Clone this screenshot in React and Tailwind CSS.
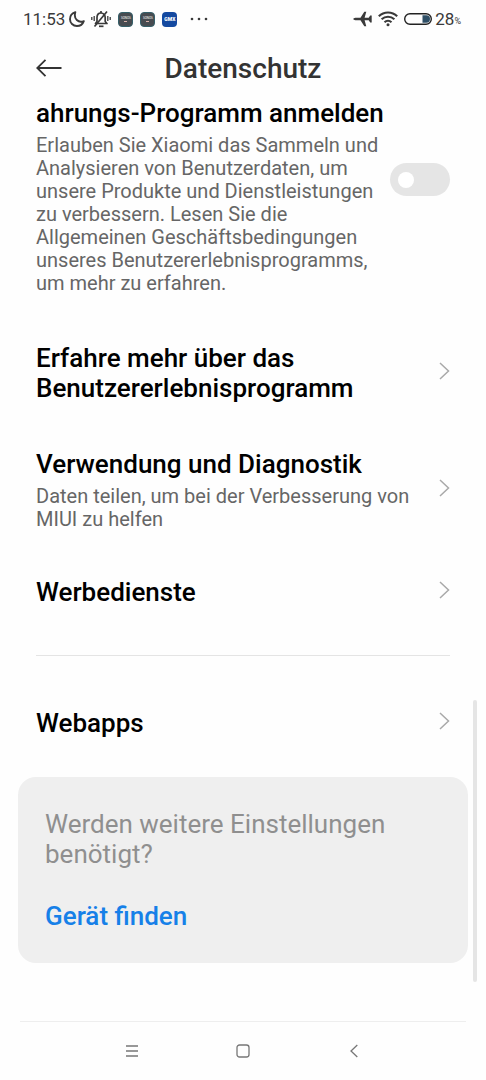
import { useState } from 'react';

const Chevron = () => (
  <svg className="w-3 h-5 shrink-0" viewBox="0 0 12 20" fill="none" stroke="#a9a9a9" strokeWidth="1.5">
    <path d="M2 2l8.5 8L2 18" />
  </svg>
);

const StatusBar = () => (
  <div className="flex items-center justify-between h-9 pl-[23px] pr-[25px] mt-px text-[#3a3a3a]">
    <div className="flex items-center">
      <span className="text-[17px] leading-6">11:53</span>
      <svg className="w-4 h-4 ml-1" viewBox="0 0 16 16" fill="none" stroke="currentColor" strokeWidth="1.9">
        <path d="M6.3 1.2C3.2 2.2 1 5 1 8.2 1 12 4 15 7.9 15c3.200 0 5.900-2 6.900-4.900C9.500 12.300 4.300 8 6.300 1.200z" strokeLinejoin="round" />
      </svg>
      <svg className="w-5 h-[18px] ml-1.5" viewBox="0 0 20 18" fill="none" stroke="currentColor" strokeWidth="1.7">
        <path d="M4.500 13.500h11.500l-1.800-2V7.500c0-2.500-1.700-4.500-4.200-4.500S6 5 6 7.500v4z" strokeLinejoin="round" />
        <path d="M10 3V1" />
        <path d="M3.500 16.500L16 1.500" />
        <path d="M8 16.300h4.500" />
        <path d="M3.200 6v5M.8 7v3M16.800 6v5M19.200 7v3" strokeWidth="1.3" />
      </svg>
      <AppBadge label="SONOS" />
      <AppBadge label="SONOS" />
      <span className="flex items-center justify-center w-[15px] h-[15px] ml-[7px] rounded bg-[#1449a0] text-white text-[5px] leading-none font-black">
        GMX
      </span>
      <svg className="w-[18px] h-1 ml-[13px]" viewBox="0 0 18 4" fill="currentColor">
        <circle cx="2" cy="2" r="1.3" />
        <circle cx="9" cy="2" r="1.3" />
        <circle cx="16" cy="2" r="1.3" />
      </svg>
    </div>
    <div className="flex items-center">
      <svg className="w-[19px] h-4" viewBox="0 0 19 16" fill="currentColor">
        <path d="M0 8c.8-.9 2-1.200 3.500-1.200h4L11.300.8h2l-1.700 6h4.100l1.500-2.300h1.500v7h-1.500l-1.500-2.300h-4.100l1.700 6h-2L7.500 9.200h-4C2 9.200.8 8.900 0 8z" />
      </svg>
      <svg className="w-5 h-4 ml-1.5" viewBox="0 0 20 16" fill="none" stroke="currentColor" strokeWidth="2.1">
        <path d="M.8 5.300C6 .2 14 .2 19.200 5.300" />
        <path d="M3.600 8.300c3.700-3.500 9.100-3.500 12.800 0" />
        <path d="M6.500 11.200c2-1.900 5-1.900 7 0" />
        <circle cx="10" cy="13.800" r="1.500" fill="currentColor" stroke="none" />
      </svg>
      <svg className="w-7 h-3 ml-1.5" viewBox="0 0 28 12">
        <rect x=".7" y=".7" width="26.600" height="10.600" rx="5.300" fill="none" stroke="#222" strokeWidth="1.400" />
        <path d="M18.500 2.300h3.800a3.700 3.700 0 0 1 0 7.400h-3.800z" fill="#2f4f66" />
      </svg>
      <span className="ml-[3px] text-[17px] leading-6">28</span>
      <span className="mt-1 text-[9px] leading-3">%</span>
    </div>
  </div>
);

const AppBadge = ({ label }) => (
  <span className="flex flex-col items-center justify-center w-[15px] h-[15px] ml-[7px] rounded border border-[#35606a] bg-[#474b50] text-white text-[3px] leading-none">
    {label}
    <span className="w-[3px] h-px mt-px bg-[#d8b0a8]" />
  </span>
);

const Item = ({ title, description }) => (
  <a href="#" className="flex items-center justify-between gap-6 py-[21px]">
    <span className="pt-1">
      <span className="block text-[26px] leading-[30px] font-medium text-black">{title}</span>
      {description && (
        <span className="block mt-1.5 text-[20px] leading-[23px] text-[#666666]">{description}</span>
      )}
    </span>
    <Chevron />
  </a>
);

const App = () => {
  const [enrolled, setEnrolled] = useState(false);

  return (
    <div className="relative flex flex-col min-h-screen bg-[#fefefe] font-[Roboto,sans-serif]">
      <StatusBar />

      <header className="grid grid-cols-[28px_1fr_28px] items-center h-[61px] px-9">
        <button type="button" aria-label="Zurück">
          <svg className="w-[26px] h-[18px]" viewBox="0 0 26 18" fill="none" stroke="#333" strokeWidth="1.800">
            <path d="M25.500 9H1M9.500 .8L1.200 9l8.300 8.200" />
          </svg>
        </button>
        <h1 className="pt-0.5 text-center text-[28px] leading-9 font-medium text-[#333333]">Datenschutz</h1>
      </header>

      <main className="flex-1">
        <div className="px-9">
          <div className="flex justify-between pb-[23px]">
            <label htmlFor="experience" className="flex-1">
              <span className="block text-[26px] leading-[30px] font-medium text-black whitespace-nowrap">
                ahrungs-Programm anmelden
              </span>
              <span className="block max-w-[345px] mt-1.5 text-[20px] leading-[23px] text-[#666666]">
                Erlauben Sie Xiaomi das Sammeln und Analysieren von Benutzerdaten, um unsere Produkte und
                Dienstleistungen zu verbessern. Lesen Sie die Allgemeinen Geschäftsbedingungen unseres
                Benutzererlebnisprogramms, um mehr zu erfahren.
              </span>
            </label>
            <input
              id="experience"
              type="checkbox"
              role="switch"
              checked={enrolled}
              onChange={(e) => setEnrolled(e.target.checked)}
              className="appearance-none flex items-center shrink-0 w-[60px] h-[33px] mt-[65px] px-2 rounded-full bg-[#e5e5e5] checked:bg-[#0d84ff] checked:justify-end before:block before:w-4 before:h-4 before:rounded-full before:bg-white"
            />
          </div>

          <Item title="Erfahre mehr über das Benutzererlebnisprogramm" />
          <Item
            title="Verwendung und Diagnostik"
            description="Daten teilen, um bei der Verbesserung von MIUI zu helfen"
          />
          <Item title="Werbedienste" />
          <hr className="my-[27px] border-[#e4e4e4]" />
          <Item title="Webapps" />
        </div>

        <section className="mx-[18px] mt-[18px] px-[27px] py-8 rounded-[18px] bg-[#efefef] text-[26px] leading-[30px]">
          <p className="text-[#8f8f8f]">Werden weitere Einstellungen benötigt?</p>
          <a href="#" className="inline-block mt-8 font-medium text-[#1680e8]">
            Gerät finden
          </a>
        </section>
      </main>

      {/* Scroll position indicator */}
      <div className="absolute right-[9px] top-[700px] w-1 h-[282px] rounded-full bg-[#e5e5e5]" />

      <nav className="mx-5 flex justify-center h-[59px] border-t border-[#eeeeee]">
        <button type="button" aria-label="Letzte Apps" className="flex items-center justify-center w-[111px]">
          <svg className="w-3.5 h-3" viewBox="0 0 14 12" stroke="#777" strokeWidth="1.300">
            <path d="M1 1h12M1 6h12M1 11h12" />
          </svg>
        </button>
        <button type="button" aria-label="Startseite" className="flex items-center justify-center w-[111px]">
          <svg className="w-3.5 h-3.5" viewBox="0 0 14 14" fill="none" stroke="#777" strokeWidth="1.300">
            <rect x="1" y="1" width="12" height="12" rx="2.500" />
          </svg>
        </button>
        <button type="button" aria-label="Zurück" className="flex items-center justify-center w-[111px]">
          <svg className="w-2 h-3.5" viewBox="0 0 8 14" fill="none" stroke="#777" strokeWidth="1.300">
            <path d="M7.300 1L1 7l6.300 6" />
          </svg>
        </button>
      </nav>
    </div>
  );
};

export default App;
